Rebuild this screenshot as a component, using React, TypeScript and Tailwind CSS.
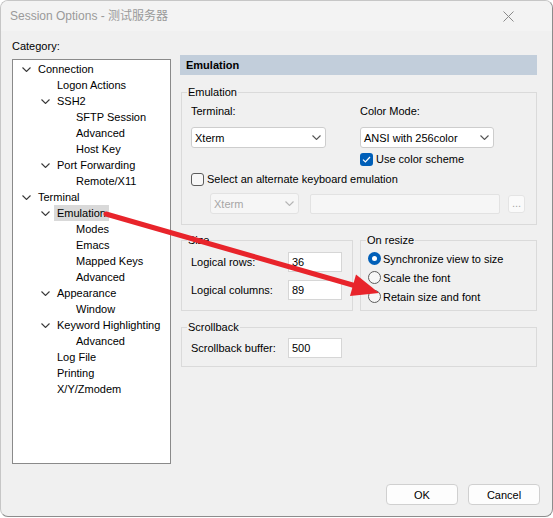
import clsx from 'clsx';
import type { ReactNode } from 'react';

interface TreeItem {
  label: string;
  level: 0 | 1 | 2;
  expanded?: boolean;
  selected?: boolean;
}

const TREE: TreeItem[] = [
  { label: 'Connection', level: 0, expanded: true },
  { label: 'Logon Actions', level: 1 },
  { label: 'SSH2', level: 1, expanded: true },
  { label: 'SFTP Session', level: 2 },
  { label: 'Advanced', level: 2 },
  { label: 'Host Key', level: 2 },
  { label: 'Port Forwarding', level: 1, expanded: true },
  { label: 'Remote/X11', level: 2 },
  { label: 'Terminal', level: 0, expanded: true },
  { label: 'Emulation', level: 1, expanded: true, selected: true },
  { label: 'Modes', level: 2 },
  { label: 'Emacs', level: 2 },
  { label: 'Mapped Keys', level: 2 },
  { label: 'Advanced', level: 2 },
  { label: 'Appearance', level: 1, expanded: true },
  { label: 'Window', level: 2 },
  { label: 'Keyword Highlighting', level: 1, expanded: true },
  { label: 'Advanced', level: 2 },
  { label: 'Log File', level: 1 },
  { label: 'Printing', level: 1 },
  { label: 'X/Y/Zmodem', level: 1 },
];

const INDENT = ['pl-[6px]', 'pl-[25px]', 'pl-[44px]'];

function Chevron({ className }: { className?: string }) {
  return (
    <svg width="9" height="5" viewBox="0 0 9 5" className={className} fill="none">
      <path d="M0.5 0.5 L4.5 4.5 L8.5 0.5" stroke="currentColor" strokeWidth="1.1" />
    </svg>
  );
}

function TreeRow({ item }: { item: TreeItem }) {
  return (
    <div className={clsx('flex h-[16px] items-center', INDENT[item.level])}>
      <span className="flex w-[16px] items-center">
        {item.expanded ? <Chevron className="ml-[3px] text-[#3a3a3a]" /> : null}
      </span>
      <span className={clsx('px-[3px] leading-[16px]', item.selected && 'bg-[#d9d9d9]')}>{item.label}</span>
    </div>
  );
}

function Combo({ value, width, disabled = false }: { value: string; width: string; disabled?: boolean }) {
  return (
    <div
      className={clsx(
        'flex h-[21px] items-center justify-between rounded-[3px] border pr-[4px] pl-[3px]',
        disabled ? 'border-[#e2e2e2] bg-[#f6f6f6] text-[#a6a6a6]' : 'border-[#cdcdcd] bg-white text-black',
        width,
      )}
    >
      <span>{value}</span>
      <Chevron className={disabled ? 'text-[#b5b5b5]' : 'text-[#555]'} />
    </div>
  );
}

function TextBox({ value, width = 'w-[54px]' }: { value?: string; width?: string }) {
  return (
    <div className={clsx('flex h-[20px] items-center border border-[#d6d6d6] bg-white pl-[3px]', width)}>{value}</div>
  );
}

function CheckBox({ checked = false }: { checked?: boolean }) {
  return checked ? (
    <span className="flex h-[13px] w-[13px] items-center justify-center rounded-[3px] bg-[#005fb8]">
      <svg width="9" height="7" viewBox="0 0 9 7" fill="none">
        <path d="M1 3.6 L3.4 6 L8 1" stroke="white" strokeWidth="1.2" />
      </svg>
    </span>
  ) : (
    <span className="h-[13px] w-[13px] rounded-[3px] border border-[#5c5c5c] bg-[#f7f7f7]" />
  );
}

function Radio({ checked = false }: { checked?: boolean }) {
  return checked ? (
    <span className="flex h-[13px] w-[13px] items-center justify-center rounded-full bg-[#005fb8]">
      <span className="h-[5px] w-[5px] rounded-full bg-white" />
    </span>
  ) : (
    <span className="h-[13px] w-[13px] rounded-full border border-[#5c5c5c] bg-[#f7f7f7]" />
  );
}

function Group({ title, className, children }: { title: string; className?: string; children: ReactNode }) {
  return (
    <fieldset className={clsx('border border-[#dadada]', className)}>
      <legend className="ml-[5px] px-[1px] leading-[16px]">{title}</legend>
      {children}
    </fieldset>
  );
}

function DialogButton({ label }: { label: string }) {
  return (
    <button
      type="button"
      className="flex h-[21px] w-[72px] items-center justify-center rounded-[4px] border border-[#d0d0d0] bg-[#fdfdfd]"
    >
      {label}
    </button>
  );
}

function Arrow() {
  return (
    <svg className="pointer-events-none absolute inset-0" width="553" height="518" viewBox="0 0 553 518">
      <line x1="106" y1="214" x2="356" y2="286" stroke="#e8242b" strokeWidth="5" strokeLinecap="round" />
      <polygon points="379,293 356,274.5 350,296" fill="#e8242b" />
    </svg>
  );
}

export default function App() {
  return (
    <div className="relative h-[518px] w-[553px] bg-white font-['Liberation_Sans','Noto_Sans_CJK_SC',sans-serif] text-[11px] leading-[16px] text-black">
      <div className="flex h-[517px] w-[553px] flex-col overflow-hidden rounded-[8px] border border-[#c6c6c6] border-r-[#8c8c8c] border-b-[#8c8c8c] bg-[#f0f0f0]">
        <div className="flex h-[30px] shrink-0 items-center justify-between bg-[#f3f3f3] pl-[9px]">
          <span className="text-[12px] text-[#9a9a9a]">Session Options - 测试服务器</span>
          <svg width="11" height="11" viewBox="0 0 11 11" className="mr-[38px]" fill="none">
            <path d="M0.5 0.5 L10.5 10.5 M10.5 0.5 L0.5 10.5" stroke="#8a8a8a" strokeWidth="1" />
          </svg>
        </div>

        <div className="flex flex-1 flex-col">
          <div className="flex">
            <div className="ml-[11px] pt-[7px]">
              <div>Category:</div>
              <div className="mt-[5px] h-[405px] w-[159px] border border-[#8a8a8a] bg-white pt-[1px]">
                {TREE.map((item, i) => (
                  <TreeRow key={i} item={item} />
                ))}
              </div>
            </div>

            <div className="mt-[24px] ml-[9px] w-[357px]">
              <div className="flex h-[20px] items-center bg-[#c2cedb] pl-[6px] font-bold">Emulation</div>

              <Group title="Emulation" className="mt-[9px] ml-[1px] w-[356px]">
                <div className="pb-[10px] pl-[9px]">
                  <div className="flex pt-[3px]">
                    <div className="w-[169px]">
                      <div>Terminal:</div>
                      <div className="mt-[8px]">
                        <Combo value="Xterm" width="w-[135px]" />
                      </div>
                    </div>
                    <div>
                      <div>Color Mode:</div>
                      <div className="mt-[8px]">
                        <Combo value="ANSI with 256color" width="w-[134px]" />
                      </div>
                      <div className="mt-[3px] flex h-[16px] items-center gap-[3px]">
                        <CheckBox checked />
                        <span>Use color scheme</span>
                      </div>
                    </div>
                  </div>
                  <div className="mt-[4px] flex h-[16px] items-center gap-[3px]">
                    <CheckBox />
                    <span>Select an alternate keyboard emulation</span>
                  </div>
                  <div className="mt-[6px] flex items-center pl-[19px]">
                    <Combo value="Xterm" width="w-[89px]" disabled />
                    <div className="ml-[11px] h-[20px] w-[190px] rounded-[2px] border border-[#e2e2e2] bg-[#f6f6f6]" />
                    <div className="ml-[8px] flex h-[18px] w-[17px] items-end justify-center rounded-[3px] border border-[#e4e4e4] bg-[#fafafa] pb-[1px] text-[#a6a6a6]">
                      ...
                    </div>
                  </div>
                </div>
              </Group>

              <div className="mt-[7px] ml-[1px] flex w-[356px] gap-[7px]">
                <Group title="Size" className="w-[172px]">
                  <div className="flex flex-col gap-[8px] pt-[4px] pb-[10px] pl-[9px]">
                    <div className="flex h-[20px] items-center">
                      <span className="w-[97px]">Logical rows:</span>
                      <TextBox value="36" />
                    </div>
                    <div className="flex h-[20px] items-center">
                      <span className="w-[97px]">Logical columns:</span>
                      <TextBox value="89" />
                    </div>
                  </div>
                </Group>
                <Group title="On resize" className="flex-1">
                  <div className="pt-[1px] pl-[7px]">
                    <div className="flex h-[19px] items-center gap-[2px]">
                      <Radio checked />
                      <span>Synchronize view to size</span>
                    </div>
                    <div className="flex h-[19px] items-center gap-[2px]">
                      <Radio />
                      <span>Scale the font</span>
                    </div>
                    <div className="flex h-[19px] items-center gap-[2px]">
                      <Radio />
                      <span>Retain size and font</span>
                    </div>
                  </div>
                </Group>
              </div>

              <Group title="Scrollback" className="mt-[8px] ml-[1px] w-[356px]">
                <div className="mt-[3px] mb-[8px] flex h-[20px] items-center pl-[9px]">
                  <span className="w-[97px]">Scrollback buffer:</span>
                  <TextBox value="500" />
                </div>
              </Group>
            </div>
          </div>

          <div className="mt-[20px] flex justify-end gap-[10px] pr-[12px]">
            <DialogButton label="OK" />
            <DialogButton label="Cancel" />
          </div>
        </div>
      </div>
      <Arrow />
    </div>
  );
}
